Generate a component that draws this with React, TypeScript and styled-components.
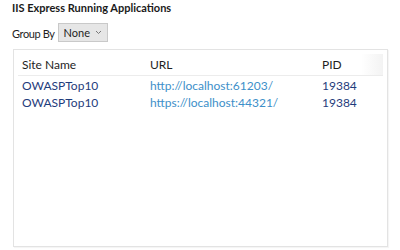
import React from "react";
import styled, { createGlobalStyle } from "styled-components";

const Global = createGlobalStyle`
  html, body { margin: 0; padding: 0; background: #ffffff; }
  body { font-family: Lato, "Open Sans", sans-serif; }
`;

const Page = styled.div`
  width: 400px;
  height: 250px;
  box-sizing: border-box;
  padding: 1px 13px 0 12px;
  display: flex;
  flex-direction: column;
`;

const Title = styled.h1`
  margin: 0;
  font-size: 11px;
  font-weight: 700;
  line-height: 14px;
  color: #1a1a1a;
`;

const Toolbar = styled.div`
  display: flex;
  align-items: center;
  gap: 3px;
  margin-top: 8px;
  height: 19px;
`;

const Label = styled.span`
  font-size: 11px;
  letter-spacing: -0.4px;
  color: #1e1e1e;
  padding-top: 2px;
`;

const Select = styled.div`
  display: flex;
  align-items: center;
  justify-content: space-between;
  box-sizing: border-box;
  width: 50px;
  height: 19px;
  padding: 0 5px 0 5px;
  background: #e6e6e6;
  border: 1px solid #c9c9c9;
  font-size: 11px;
  color: #1e1e1e;
`;

const Panel = styled.div`
  margin-top: 7px;
  margin-left: 1px;
  width: 375px;
  height: 198px;
  box-sizing: border-box;
  border: 1px solid #e3e3e3;
  box-shadow: 1px 1px 1px rgba(0, 0, 0, 0.04);
  padding: 4px 4px 0 4px;
`;

const Row = styled.div<{ $head?: boolean }>`
  display: grid;
  grid-template-columns: 128px 172px 1fr;
  height: ${(p) => (p.$head ? "21px" : "17px")};
  align-items: center;
  padding-left: 4px;
  font-size: 12px;
  border-bottom: ${(p) => (p.$head ? "1px solid #ececec" : "none")};
  background: ${(p) =>
    p.$head ? "linear-gradient(90deg, #fff 0%, #fff 94%, #f3f3f3 100%)" : "transparent"};
  margin-bottom: ${(p) => (p.$head ? "1px" : "0")};
`;

const Cell = styled.span<{ $tone: "head" | "name" | "link" | "pid" }>`
  color: ${(p) =>
    p.$tone === "head" ? "#1e1e1e" : p.$tone === "link" ? "#3d8fc9" : "#1f3c7c"};
  white-space: nowrap;
`;

const rows = [
  { name: "OWASPTop10", url: "http://localhost:61203/", pid: "19384" },
  { name: "OWASPTop10", url: "https://localhost:44321/", pid: "19384" },
];

export default function App() {
  return (
    <>
      <Global />
      <Page>
        <Title>IIS Express Running Applications</Title>
        <Toolbar>
          <Label>Group By</Label>
          <Select>
            <span>None</span>
            <svg width="7" height="5" viewBox="0 0 7 5">
              <path d="M1 1 L3.5 3.5 L6 1" fill="none" stroke="#777" strokeWidth="1" />
            </svg>
          </Select>
        </Toolbar>
        <Panel>
          <Row $head>
            <Cell $tone="head">Site Name</Cell>
            <Cell $tone="head">URL</Cell>
            <Cell $tone="head">PID</Cell>
          </Row>
          {rows.map((r) => (
            <Row key={r.url}>
              <Cell $tone="name">{r.name}</Cell>
              <Cell $tone="link">{r.url}</Cell>
              <Cell $tone="pid">{r.pid}</Cell>
            </Row>
          ))}
        </Panel>
      </Page>
    </>
  );
}
